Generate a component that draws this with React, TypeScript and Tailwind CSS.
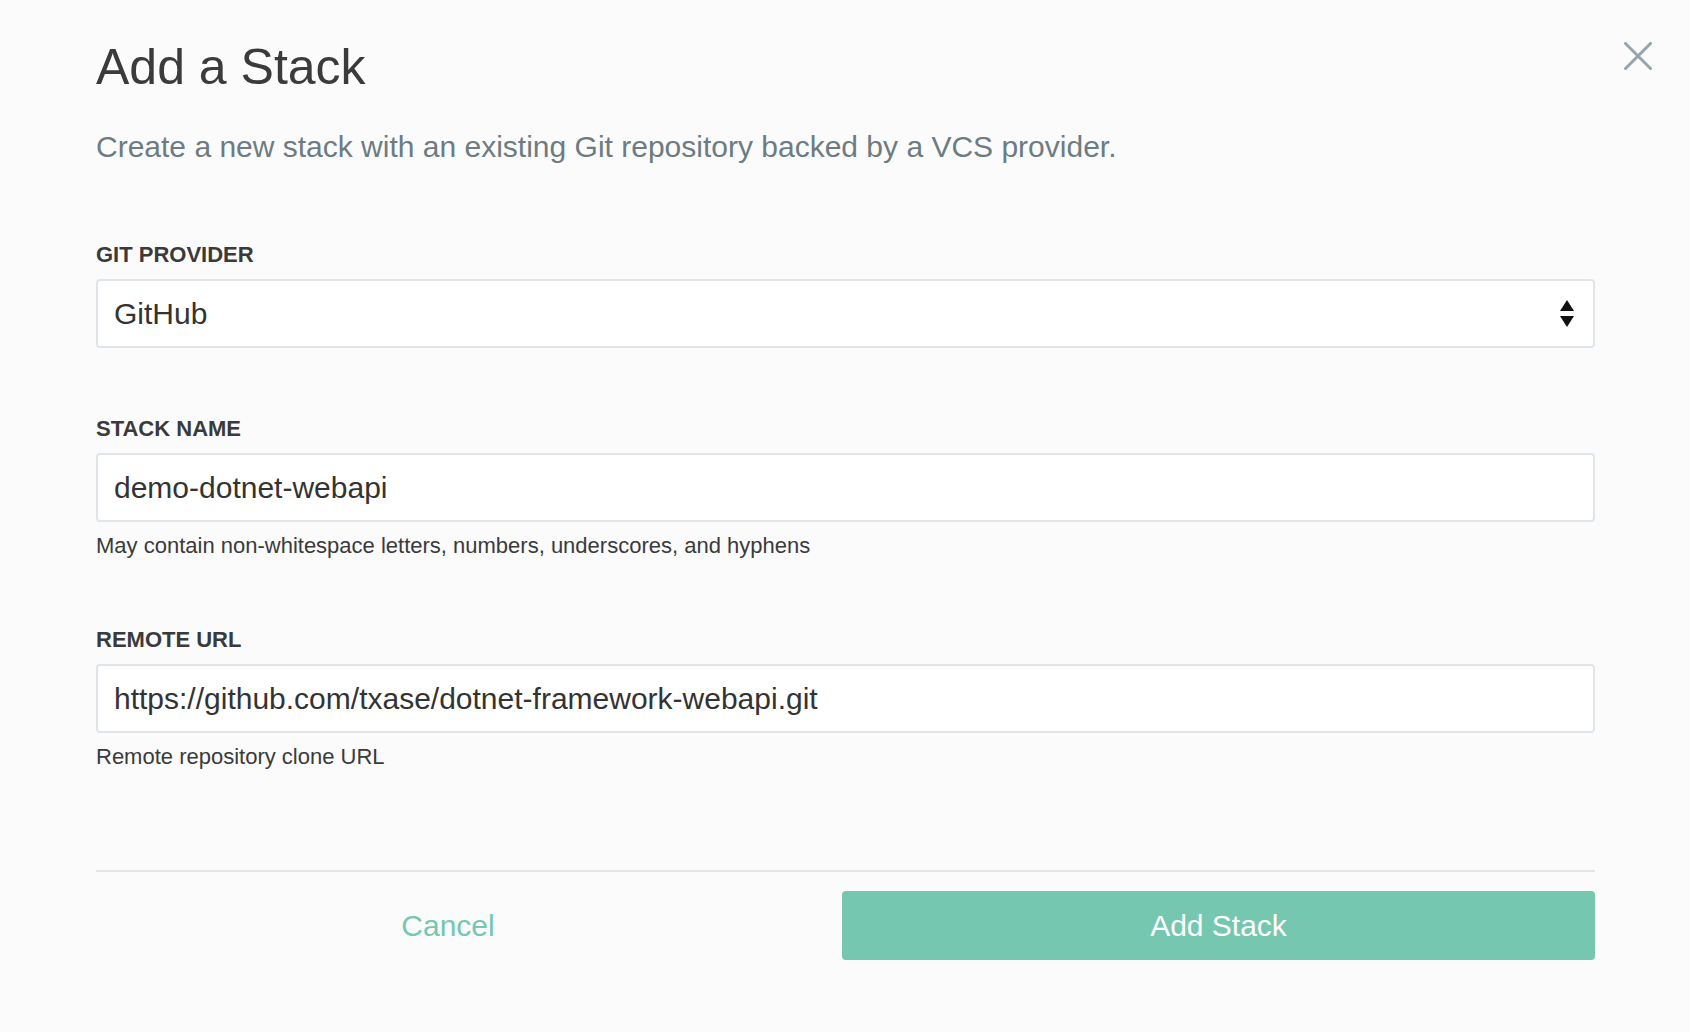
import { useState } from 'react';

const fieldBox =
  'w-full h-[69px] bg-white border-2 border-[#dfe5e9] rounded-[4px] px-4 text-[30px] text-[#333] outline-none';

function SelectArrows() {
  return (
    <svg width="14" height="27" viewBox="0 0 14 27" className="shrink-0">
      <polygon points="7,0 14,11 0,11" fill="#111" />
      <polygon points="0,16 14,16 7,27" fill="#111" />
    </svg>
  );
}

export default function App() {
  const [provider] = useState('GitHub');
  const [stackName, setStackName] = useState('demo-dotnet-webapi');
  const [remoteUrl, setRemoteUrl] = useState('https://github.com/txase/dotnet-framework-webapi.git');

  return (
    <div
      className="relative min-h-screen bg-[#fbfbfb] pl-[96px] pr-[95px] pt-[37px]"
      style={{ fontFamily: '"Liberation Sans", Arial, Helvetica, sans-serif' }}
    >
      <button className="absolute top-[42px] right-[38px] w-[28px] h-[28px]" aria-label="Close">
        <svg width="28" height="28" viewBox="0 0 28 28">
          <path d="M1.5 1.5 L26.5 26.5 M26.5 1.5 L1.5 26.5" stroke="#95a5ac" strokeWidth="3" strokeLinecap="square" />
        </svg>
      </button>

      <h1 className="text-[50px] leading-[60px] text-[#3b3b3b]">Add a Stack</h1>
      <p className="mt-[32px] text-[30px] leading-[36px] text-[#6d7c82]">
        Create a new stack with an existing Git repository backed by a VCS provider.
      </p>

      <div className="mt-[77px]">
        <label className="block text-[22px] leading-[26px] font-bold text-[#3a3a3a]">GIT PROVIDER</label>
        <div className={`${fieldBox} mt-[11px] flex items-center justify-between pr-[19px]`}>
          <span>{provider}</span>
          <SelectArrows />
        </div>
      </div>

      <div className="mt-[68px]">
        <label className="block text-[22px] leading-[26px] font-bold text-[#3a3a3a]">STACK NAME</label>
        <input
          className={`${fieldBox} mt-[11px] block`}
          style={{ fontFamily: 'inherit' }}
          value={stackName}
          onChange={(e) => setStackName(e.target.value)}
        />
        <p className="mt-[11px] text-[22px] leading-[26px] text-[#3a3a3a]">
          May contain non-whitespace letters, numbers, underscores, and hyphens
        </p>
      </div>

      <div className="mt-[68px]">
        <label className="block text-[22px] leading-[26px] font-bold text-[#3a3a3a]">REMOTE URL</label>
        <input
          className={`${fieldBox} mt-[11px] block`}
          style={{ fontFamily: 'inherit' }}
          value={remoteUrl}
          onChange={(e) => setRemoteUrl(e.target.value)}
        />
        <p className="mt-[11px] text-[22px] leading-[26px] text-[#3a3a3a]">Remote repository clone URL</p>
      </div>

      <div className="mt-[100px] h-[2px] bg-[#dfe5e9]" />

      <div className="mt-[19px] flex gap-[42px]">
        <button className="flex-1 h-[69px] text-[30px] text-[#76c7b0]">Cancel</button>
        <button className="w-[753px] h-[69px] rounded-[4px] bg-[#76c7b0] text-[30px] text-white">Add Stack</button>
      </div>
    </div>
  );
}
